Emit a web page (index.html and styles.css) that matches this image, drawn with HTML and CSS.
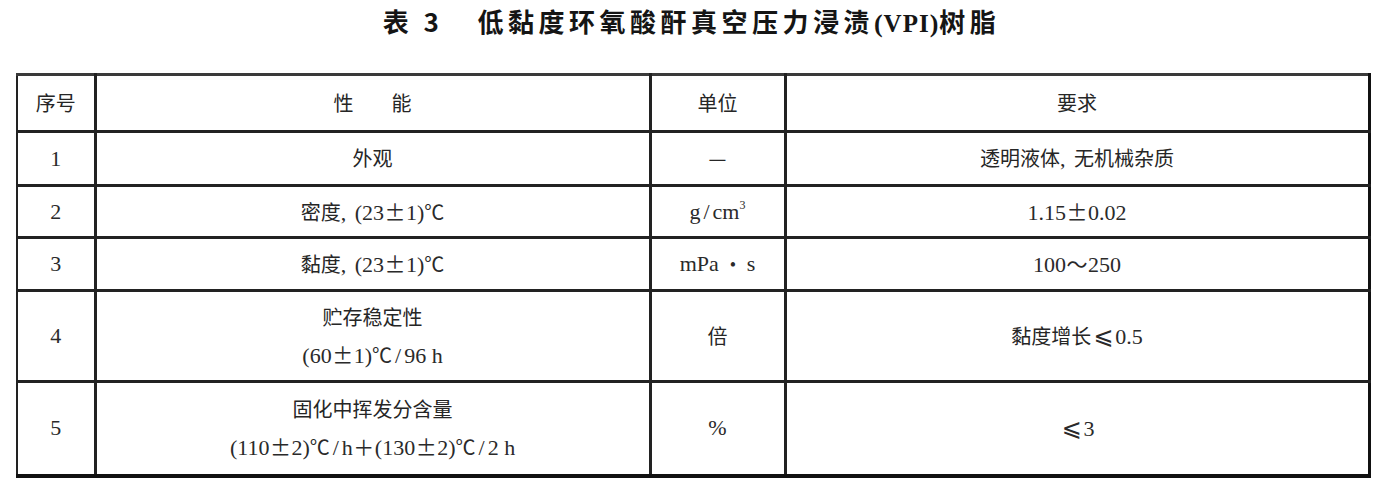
FILE: index.html
```html
<!DOCTYPE html>
<html lang="zh-CN">
<head>
<meta charset="utf-8">
<title>表 3</title>
<link rel="stylesheet" href="styles.css">
</head>
<body>
<h1 class="title"><span class="tno">表 3</span><span class="tname">低黏度环氧酸酐真空压力浸渍<span class="paren">(</span><span class="latin">VPI</span><span class="paren">)</span>树脂</span></h1>
<table class="spec">
  <colgroup>
    <col class="c1"><col class="c2"><col class="c3"><col class="c4">
  </colgroup>
  <thead>
    <tr class="r-head">
      <th><span class="zh">序号</span></th>
      <th><span class="zh">性<span class="sp"></span>能</span></th>
      <th><span class="zh">单位</span></th>
      <th><span class="zh">要求</span></th>
    </tr>
  </thead>
  <tbody>
    <tr class="r1">
      <td>1</td>
      <td><span class="zh">外观</span></td>
      <td><span class="zh">—</span></td>
      <td><span class="zh">透明液体<span class="fwc">,</span>无机械杂质</span></td>
    </tr>
    <tr class="r2">
      <td>2</td>
      <td><span class="zh">密度<span class="fwc">,</span></span>(23<span class="fw">±</span>1)<span class="deg">℃</span></td>
      <td>g<span class="sl">/</span>cm<sup>3</sup></td>
      <td>1.15<span class="fw">±</span>0.02</td>
    </tr>
    <tr class="r3">
      <td>3</td>
      <td><span class="zh">黏度<span class="fwc">,</span></span>(23<span class="fw">±</span>1)<span class="deg">℃</span></td>
      <td>mPa<span class="dot">•</span>s</td>
      <td>100<span class="fw">～</span>250</td>
    </tr>
    <tr class="r4">
      <td>4</td>
      <td><div class="line"><span class="zh">贮存稳定性</span></div><div class="line">(60<span class="fw">±</span>1)<span class="deg">℃</span><span class="sl">/</span>96 h</div></td>
      <td><span class="zh">倍</span></td>
      <td><span class="zh">黏度增长</span><span class="le">⩽</span>0.5</td>
    </tr>
    <tr class="r5">
      <td>5</td>
      <td><div class="line"><span class="zh">固化中挥发分含量</span></div><div class="line">(110<span class="fw">±</span>2)<span class="deg">℃</span><span class="sl">/</span>h<span class="fw">＋</span>(130<span class="fw">±</span>2)<span class="deg">℃</span><span class="sl">/</span>2 h</div></td>
      <td>%</td>
      <td><span class="le">⩽</span>3</td>
    </tr>
  </tbody>
</table>
</body>
</html>
```

FILE: styles.css
```css
html, body {
  margin: 0;
  padding: 0;
  background: #ffffff;
}
body {
  width: 1383px;
  height: 496px;
  overflow: hidden;
  font-family: "Liberation Serif", "Noto Sans CJK SC", serif;
  color: #2a2a2a;
}
.title {
  margin: 0;
  padding-top: 4px;
  height: 36px;
  text-align: center;
  font-family: "Noto Sans CJK SC", sans-serif;
  font-weight: 700;
  font-size: 26px;
  line-height: 34px;
  color: #151515;
  letter-spacing: 4.5px;
}
.tno {
  margin-right: 34px;
}
.title .latin {
  font-family: "Liberation Serif", serif;
  font-weight: 700;
  font-size: 25px;
  letter-spacing: 1px;
}
.title .paren {
  font-family: "Liberation Serif", serif;
  font-weight: 700;
  letter-spacing: 1px;
}
.spec {
  margin: 33px 0 0 16px;
  border-collapse: collapse;
  table-layout: fixed;
  width: 1352px;
  font-size: 22px;
  border-top: 3px solid #3a3a3a;
  border-left: 2px solid #222;
  border-right: 3px solid #111;
  border-bottom: 4px solid #111;
}
.c1 { width: 78px; }
.c2 { width: 555px; }
.c3 { width: 135px; }
.c4 { width: 584px; }
.spec th, .spec td {
  border: 3px solid #222;
  text-align: center;
  vertical-align: middle;
  padding: 0;
  font-weight: 400;
  line-height: 26px;
}
.spec tr > :first-child { border-left-width: 2px; }
.spec tr > :last-child { border-right: 3px solid #111; }
.spec thead tr > * { border-top: 3px solid #3a3a3a; }
.spec tbody tr:last-child > * { border-bottom: 4px solid #111; }
.r-head { height: 57px; }
.r1 { height: 54px; }
.r2 { height: 52px; }
.r3 { height: 53px; }
.r4 { height: 91px; }
.r5 { height: 94px; }
.zh {
  font-family: "Noto Sans CJK SC", sans-serif;
  font-size: 20px;
  color: #262626;
}
.sp {
  display: inline-block;
  width: 38px;
}
.fw {
  display: inline-block;
  width: 22px;
  text-align: center;
  font-family: "Noto Sans CJK SC", sans-serif;
  font-size: 21px;
}
.deg {
  font-family: "Noto Sans CJK SC", sans-serif;
  font-size: 20px;
}
.sl {
  display: inline-block;
  padding: 0 3px;
}
.fwc {
  display: inline-block;
  width: 14px;
  text-align: left;
  font-family: "Liberation Serif", serif;
  font-size: 22px;
}
.dot {
  display: inline-block;
  width: 28px;
  text-align: center;
  font-size: 18px;
}
.le {
  display: inline-block;
  width: 24px;
  text-align: center;
  font-family: "DejaVu Sans", sans-serif;
  font-size: 24px;
}
sup {
  font-size: 12px;
  vertical-align: 10px;
  line-height: 0;
}
.line {
  line-height: 37px;
}
```
